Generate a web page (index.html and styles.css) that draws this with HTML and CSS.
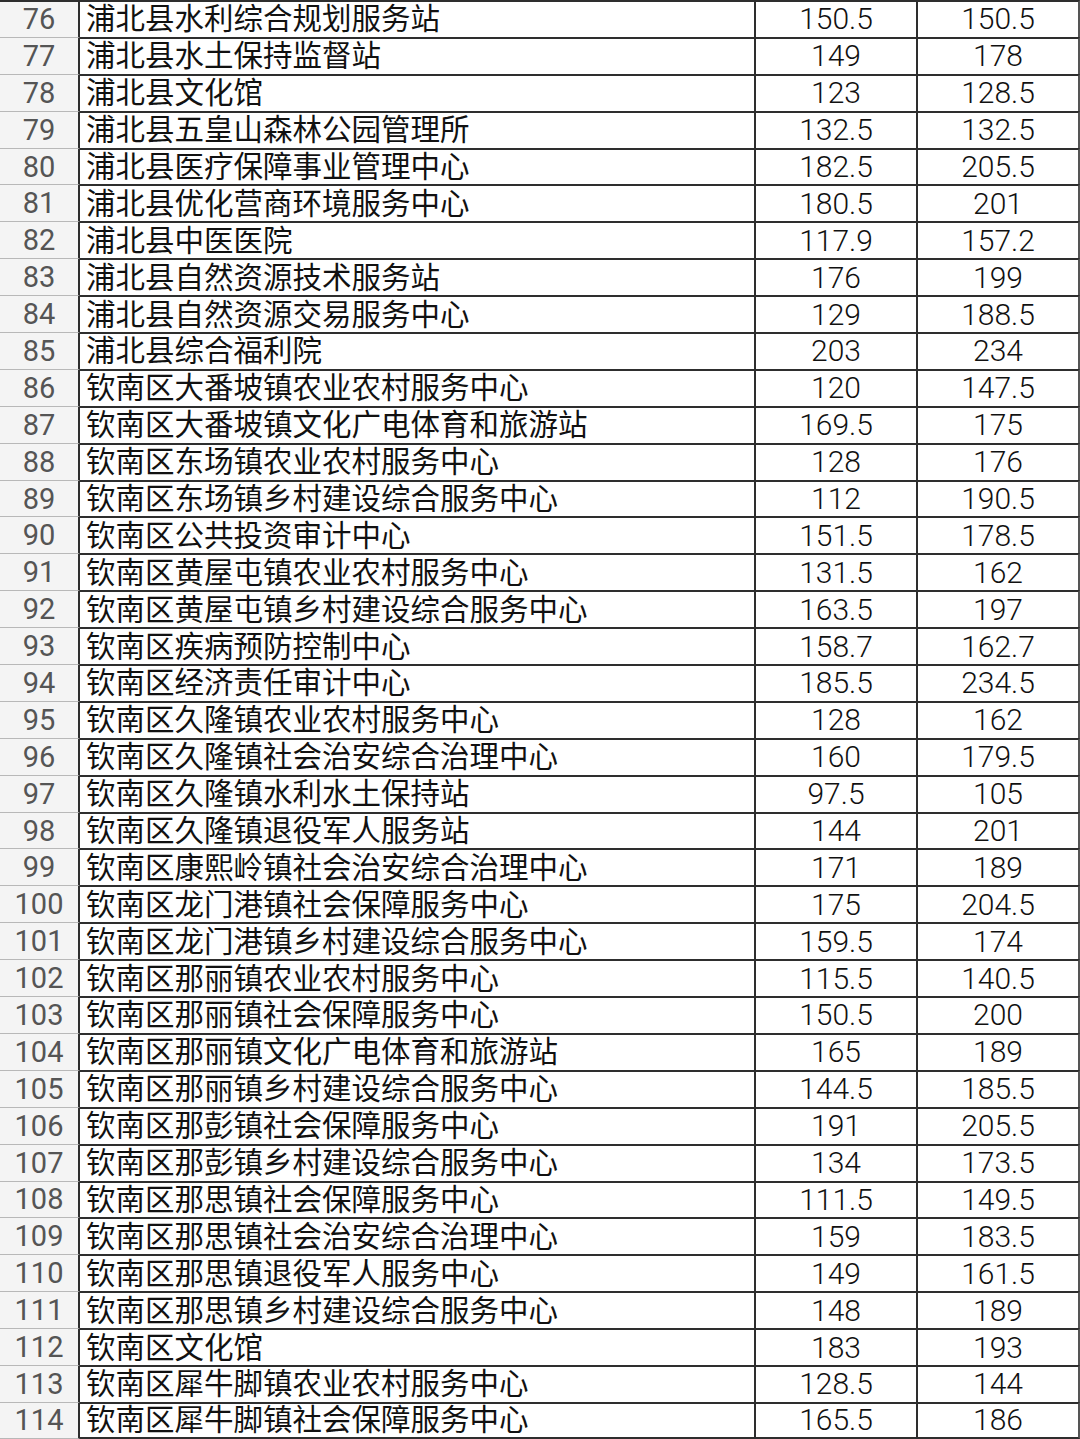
FILE: index.html
```html
<!DOCTYPE html>
<html lang="zh">
<head>
<meta charset="utf-8">
<link rel="stylesheet" href="styles.css">
</head>
<body>
<div class="sheet" id="sheet"></div>
<script>
const data = `76 浦北县水利综合规划服务站 150.5 150.5
77 浦北县水土保持监督站 149 178
78 浦北县文化馆 123 128.5
79 浦北县五皇山森林公园管理所 132.5 132.5
80 浦北县医疗保障事业管理中心 182.5 205.5
81 浦北县优化营商环境服务中心 180.5 201
82 浦北县中医医院 117.9 157.2
83 浦北县自然资源技术服务站 176 199
84 浦北县自然资源交易服务中心 129 188.5
85 浦北县综合福利院 203 234
86 钦南区大番坡镇农业农村服务中心 120 147.5
87 钦南区大番坡镇文化广电体育和旅游站 169.5 175
88 钦南区东场镇农业农村服务中心 128 176
89 钦南区东场镇乡村建设综合服务中心 112 190.5
90 钦南区公共投资审计中心 151.5 178.5
91 钦南区黄屋屯镇农业农村服务中心 131.5 162
92 钦南区黄屋屯镇乡村建设综合服务中心 163.5 197
93 钦南区疾病预防控制中心 158.7 162.7
94 钦南区经济责任审计中心 185.5 234.5
95 钦南区久隆镇农业农村服务中心 128 162
96 钦南区久隆镇社会治安综合治理中心 160 179.5
97 钦南区久隆镇水利水土保持站 97.5 105
98 钦南区久隆镇退役军人服务站 144 201
99 钦南区康熙岭镇社会治安综合治理中心 171 189
100 钦南区龙门港镇社会保障服务中心 175 204.5
101 钦南区龙门港镇乡村建设综合服务中心 159.5 174
102 钦南区那丽镇农业农村服务中心 115.5 140.5
103 钦南区那丽镇社会保障服务中心 150.5 200
104 钦南区那丽镇文化广电体育和旅游站 165 189
105 钦南区那丽镇乡村建设综合服务中心 144.5 185.5
106 钦南区那彭镇社会保障服务中心 191 205.5
107 钦南区那彭镇乡村建设综合服务中心 134 173.5
108 钦南区那思镇社会保障服务中心 111.5 149.5
109 钦南区那思镇社会治安综合治理中心 159 183.5
110 钦南区那思镇退役军人服务中心 149 161.5
111 钦南区那思镇乡村建设综合服务中心 148 189
112 钦南区文化馆 183 193
113 钦南区犀牛脚镇农业农村服务中心 128.5 144
114 钦南区犀牛脚镇社会保障服务中心 165.5 186`;
const sheet = document.getElementById('sheet');
data.split('\n').forEach(line => {
  const [n, name, a, b] = line.split(' ');
  const row = document.createElement('div');
  row.className = 'row';
  [[n, 'cell idx'], [name, 'cell name'], [a, 'cell num'], [b, 'cell num']].forEach(([t, c]) => {
    const d = document.createElement('div');
    d.className = c;
    const s = document.createElement('span');
    s.className = 'txt';
    s.textContent = t;
    d.appendChild(s);
    row.appendChild(d);
  });
  sheet.appendChild(row);
});
</script>
</body>
</html>
```
FILE: styles.css
```css
html, body {
  margin: 0;
  padding: 0;
  background: #ffffff;
}
.sheet {
  width: 1080px;
  height: 1439px;
  display: flex;
  flex-direction: column;
  font-family: Roboto, "Noto Sans CJK SC", sans-serif;
  font-weight: 300;
  font-size: 30px;
  color: #111;
}
.row {
  display: grid;
  grid-template-columns: 80px 676px 162px 162px;
  height: 36.9px;
  flex: 0 0 36.9px;
}
.cell {
  box-sizing: border-box;
  border-top: 2px solid #2e2e2e;
  border-right: 2px solid #2e2e2e;
  display: flex;
  align-items: center;
  white-space: nowrap;
}
.txt {
  display: block;
  line-height: 30px;
}
.row:last-child .cell {
  border-bottom: 2px solid #2e2e2e;
}
.idx {
  background: #f4f4f4;
  color: #555;
  font-weight: 400;
  font-size: 29px;
  justify-content: center;
  border-top: 1px solid #b8b8b8;
  border-right: 2px solid #2e2e2e;
}
.row:first-child .idx {
  border-top: 2px solid #2e2e2e;
}
.row:last-child .idx {
  border-bottom: 1px solid #b8b8b8;
}
.name {
  padding-left: 6px;
  font-family: "Noto Sans CJK SC", sans-serif;
  font-weight: 400;
  font-size: 29.5px;
}
.name .txt {
  line-height: 30px;
  position: relative;
  top: -3px;
}
.num {
  justify-content: center;
}
.row .cell:last-child {
  border-right: 2px solid #555;
}
```
